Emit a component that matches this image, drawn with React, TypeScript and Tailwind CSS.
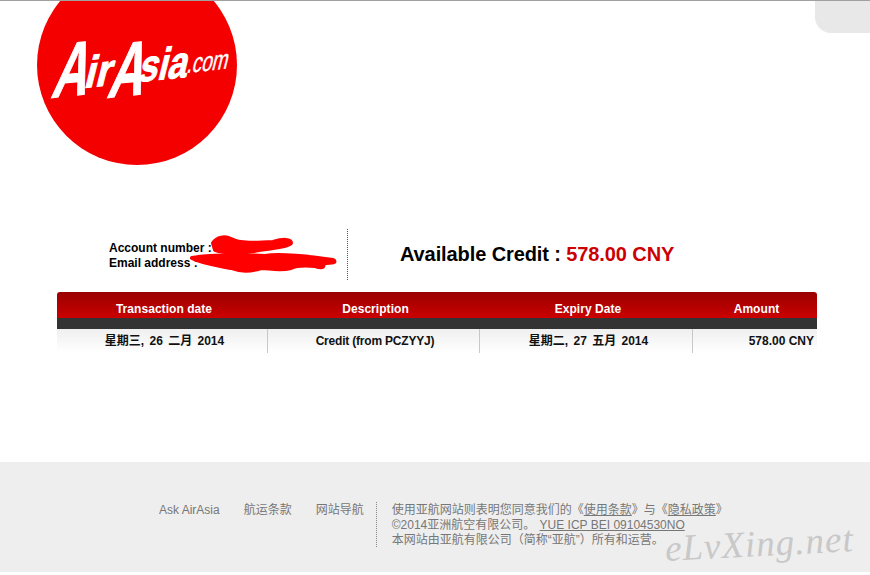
const FONT = "font-['Liberation_Sans','Noto_Sans_CJK_SC',sans-serif]";

const COLUMNS = [
  { label: "Transaction date", width: "w-[211px]" },
  { label: "Description", width: "w-[212px]" },
  { label: "Expiry Date", width: "w-[213px]" },
  { label: "Amount", width: "flex-1" },
];

// each part of the wordmark sits on its own slanted baseline
const LOGO_PARTS = [
  { text: "A", x: 13, y: 97, size: 76, length: 36, weight: 700, stroke: 1 },
  { text: "ir", x: 46, y: 87, size: 44, length: 27, weight: 700, stroke: 1 },
  { text: "A", x: 69, y: 97, size: 76, length: 36, weight: 700, stroke: 1 },
  { text: "sia", x: 100, y: 81, size: 44, length: 49, weight: 700, stroke: 1 },
  { text: ".com", x: 149, y: 72, size: 27, length: 41, weight: 400, stroke: 0.4 },
];

function Logo() {
  return (
    <svg width="220" height="164" viewBox="0 0 220 164" className="block">
      <circle cx="100" cy="64" r="100" fill="#f50000" />
      {LOGO_PARTS.map((p) => (
        <text
          key={p.x}
          transform={`translate(${p.x} ${p.y}) rotate(-6) skewX(-20)`}
          fill="#fff"
          stroke="#fff"
          strokeWidth={p.stroke}
          fontFamily="'Liberation Sans', sans-serif"
          fontWeight={p.weight}
          fontSize={p.size}
          textLength={p.length}
          lengthAdjust="spacingAndGlyphs"
        >
          {p.text}
        </text>
      ))}
    </svg>
  );
}

// red marker scribbles hiding the account details
function Scribble() {
  return (
    <svg width="160" height="44" viewBox="0 0 160 44" className="absolute left-[130px] top-[6px]" fill="#ff0000" stroke="#ff0000" strokeLinecap="round" strokeLinejoin="round" strokeWidth="4">
      <path d="M26 8 C30 2 38 1 44 4 C52 9 70 8 86 7 C96 4 104 4 104 8 C100 12 86 13 72 15 C58 18 38 19 28 15 Z" />
      <path d="M5 23 C20 20 60 20 78 21 C90 19 110 20 146 25 C150 27 146 28 136 28 C138 33 134 33 128 31 C118 30 108 31 104 33 C92 36 82 33 74 33 C62 37 52 36 44 33 C30 30 14 28 5 23 Z" />
    </svg>
  );
}

function Watermark() {
  return (
    <span className="absolute left-[665px] top-[68px] origin-left -rotate-3 font-['Liberation_Serif',serif] text-[37px] leading-none italic tracking-[1px] text-[#c8c8c8]">
      eLvXing.net
    </span>
  );
}

export default function App() {
  return (
    <div className={`relative min-h-[575px] bg-white ${FONT}`}>
      <div className="h-px bg-[#a0a0a0]" />
      <div className="absolute right-0 top-px h-8 w-[55px] rounded-bl-[16px] bg-[#e8e8e8]" />

      <div className="pl-[37px]">
        <Logo />
      </div>

      <div className="relative mt-[64px] ml-[57px] flex h-[51px] w-[760px] items-center">
        <div className="w-[290px] pl-[52px] pt-[3px] text-[12px] leading-[15px] font-bold text-black">
          <div>Account number :</div>
          <div>Email address :</div>
        </div>
        <Scribble />
        <div className="h-full border-l border-dotted border-[#555]" />
        <div className="ml-[52px] mb-[2px] text-[20px] leading-none font-bold tracking-[-0.1px] text-black">
          Available Credit : <span className="text-[#cc0000]">578.00 CNY</span>
        </div>
      </div>

      <div className="mt-3 ml-[57px] w-[760px]">
        <div className="flex h-[26px] rounded-t-[3px] bg-gradient-to-b from-[#990000] to-[#cc0000]">
          {COLUMNS.map((c) => (
            <div key={c.label} className={`${c.width} pt-[10px] pl-[3px] text-center text-[12px] leading-[15px] font-bold tracking-[0.05px] text-white`}>
              {c.label}
            </div>
          ))}
        </div>
        <div className="h-[11px] bg-[#333333]" />
        <div className="flex h-[24px] bg-gradient-to-b from-[#efefef] to-white text-[12px] leading-[25px] font-bold text-[#111]">
          <div className="w-[211px] border-r border-[#c8c8c8] pl-[5px] text-center [word-spacing:2px]">星期三, 26 二月 2014</div>
          <div className="w-[212px] border-r border-[#c8c8c8] pl-[3px] text-center tracking-[-0.2px]">Credit (from PCZYYJ)</div>
          <div className="w-[213px] border-r border-[#c8c8c8] pl-[5px] text-center [word-spacing:2px]">星期二, 27 五月 2014</div>
          <div className="flex-1 pr-[3px] text-right">578.00 CNY</div>
        </div>
      </div>

      <div className="relative mt-[109px] h-[110px] bg-[#eeeeee] text-[12px] leading-[15px] text-[#777]">
        <div className="flex pl-[159px] pt-[40px]">
          <a className="pt-px">Ask AirAsia</a>
          <a className="ml-[24px] pt-px">航运条款</a>
          <a className="ml-[24px] pt-px">网站导航</a>
          <div className="ml-[12px] h-[45px] border-l border-dotted border-[#888]" />
          <div className="ml-[15px] pt-px">
            <div>
              使用亚航网站则表明您同意我们的《<span className="underline">使用条款</span>》与《<span className="underline">隐私政策</span>》
            </div>
            <div>
              ©2014亚洲航空有限公司。 <span className="ml-px underline">YUE ICP BEI 09104530NO</span>
            </div>
            <div>本网站由亚航有限公司（简称“亚航”）所有和运营。</div>
          </div>
        </div>
        <Watermark />
      </div>
    </div>
  );
}
